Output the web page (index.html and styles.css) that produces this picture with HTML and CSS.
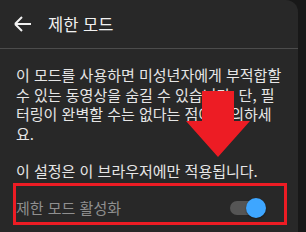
FILE: index.html
```html
<!DOCTYPE html>
<html lang="ko">
<head>
  <meta charset="UTF-8">
  <meta name="viewport" content="width=device-width, initial-scale=1.0">
  <title>제한 모드</title>
  <link rel="stylesheet" href="styles.css">
</head>
<body>
  <div class="panel">
    <div class="header">
      <svg class="back" width="24" height="24" viewBox="0 0 24 24">
        <path d="M4 12H20M4 12L11 5M4 12L11 19" fill="none" stroke="#f1f1f1" stroke-width="2"/>
      </svg>
      <div class="title">제한 모드</div>
    </div>

    <div class="content">
      <p class="desc">이 모드를 사용하면 미성년자에게 부적합할 수 있는 동영상을 숨길 수 있습니다. 단, 필터링이 완벽할 수는 없다는 점에 유의하세요.</p>
      <p class="desc note">이 설정은 이 브라우저에만 적용됩니다.</p>

      <div class="row">
        <span class="label">제한 모드 활성화</span>
        <div class="toggle">
          <div class="track"></div>
          <div class="knob"></div>
        </div>
      </div>
    </div>

    <!-- annotation overlay -->
    <div class="mark-box"></div>
    <svg class="mark-arrow" width="64" height="66" viewBox="0 0 64 66">
      <polygon points="16,0 48,0 48,30 64,30 32,66 0,30 16,30" fill="#ed1c24"/>
    </svg>
  </div>
</body>
</html>
```

FILE: styles.css
```css
body {
  margin: 0;
  background: #181818;
  font-family: "Noto Sans CJK KR", "Noto Sans", sans-serif;
  overflow: hidden;
}

.panel {
  position: relative;
  width: 298px;
  height: 232px;
  background: #282828;
  border-top-right-radius: 12px;
  overflow: hidden;
}

.header {
  height: 48px;
  display: flex;
  align-items: center;
  padding-left: 11px;
  border-bottom: 1px solid #4c4c4c;
}

.back {
  display: block;
}

.title {
  margin-left: 13px;
  font-size: 16.5px;
  color: #f1f1f1;
}

.content {
  padding: 16px 16px 0 16px;
}

.desc {
  margin: 0 0 18px;
  font-size: 15px;
  line-height: 19.5px;
  color: #e6e6e6;
  word-break: break-all;
}

.note {
  margin-bottom: 9px;
}

.row {
  height: 36px;
  display: flex;
  align-items: center;
  justify-content: space-between;
}

.label {
  font-size: 15px;
  color: #8f8f8f;
}

.toggle {
  position: relative;
  width: 36px;
  height: 20px;
  margin-right: 16px;
}

.track {
  position: absolute;
  left: 0;
  top: 3px;
  width: 33px;
  height: 14px;
  border-radius: 7px;
  background: #555;
}

.knob {
  position: absolute;
  right: 0;
  top: 0;
  width: 20px;
  height: 20px;
  border-radius: 50%;
  background: #3ea6ff;
  box-shadow: 0 1px 2px rgba(0, 0, 0, 0.4);
}

.mark-box {
  position: absolute;
  left: 13px;
  top: 183px;
  width: 274px;
  height: 42px;
  box-sizing: border-box;
  border: 3px solid #ed1c24;
}

.mark-arrow {
  position: absolute;
  left: 186px;
  top: 91px;
}
```
